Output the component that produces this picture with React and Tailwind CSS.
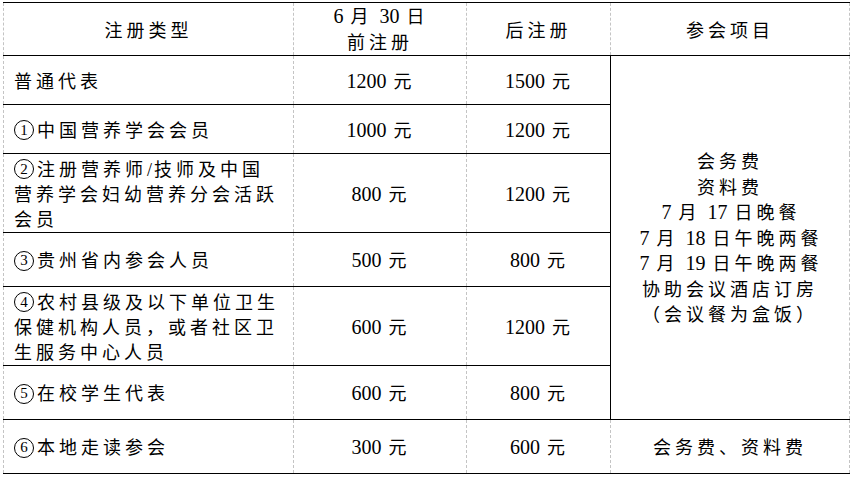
const NUM = /([0-9/ ]+)/;

// circled list marker drawn as a css ring with a real digit inside
function Circ({ n }) {
  return (
    <span className="inline-flex items-center justify-center w-[20px] h-[20px] rounded-full border border-black mr-[3px] align-[2px] text-[15px] leading-none" style={{ fontFamily: '"Liberation Serif", serif' }}>
      {n}
    </span>
  );
}

// mixed run: digits in Times-like face, CJK spaced out as in the Word doc
function T({ s }) {
  const m = s.match(/^([①②③④⑤⑥])(.*)$/);
  let mark = null;
  if (m) {
    mark = <Circ n={'①②③④⑤⑥'.indexOf(m[1]) + 1} />;
    s = m[2];
  }
  return (
    <>
      {mark}
      {s.split(NUM).filter(Boolean).map((part, i) =>
        part === '/' ? (
          <span key={i} className="text-[18px] tracking-[2px]" style={{ fontFamily: '"Liberation Serif", serif' }}>/</span>
        ) : NUM.test(part) ? (
          <span key={i} className="text-[20px] tracking-normal whitespace-pre px-[2px]" style={{ fontFamily: '"Liberation Serif", serif' }}>
            {part}
          </span>
        ) : (
          <span key={i} className="text-[18px] tracking-[4px]">{part}</span>
        )
      )}
    </>
  );
}

function Lines({ lines, h = 'h-[25px]' }) {
  return lines.map((l, i) => (
    <div key={i} className={`${h} whitespace-nowrap`}>
      <T s={l} />
    </div>
  ));
}

const cell = 'p-0 border-y border-y-black border-x border-x-[#c4c4c4] border-dashed [border-top-style:solid] [border-bottom-style:solid] align-middle';

const ROWS = [
  { h: 'h-[49px]', name: ['普通代表'], early: '1200 元', late: '1500 元' },
  { h: 'h-[49px]', name: ['①中国营养学会会员'], early: '1000 元', late: '1200 元' },
  { h: 'h-[79px]', name: ['②注册营养师/技师及中国', '营养学会妇幼营养分会活跃', '会员'], early: '800 元', late: '1200 元' },
  { h: 'h-[54px]', name: ['③贵州省内参会人员'], early: '500 元', late: '800 元' },
  { h: 'h-[79px]', name: ['④农村县级及以下单位卫生', '保健机构人员，或者社区卫', '生服务中心人员'], early: '600 元', late: '1200 元' },
  { h: 'h-[54px]', name: ['⑤在校学生代表'], early: '600 元', late: '800 元' },
];

const ITEMS = ['会务费', '资料费', '7 月 17 日晚餐', '7 月 18 日午晚两餐', '7 月 19 日午晚两餐', '协助会议酒店订房', '（会议餐为盒饭）'];

export default function App() {
  return (
    <div className="w-[851px] h-[479px] bg-white text-black text-[18px] pt-[2px] pl-[3px]" style={{ fontFamily: '"Noto Sans CJK SC", "Liberation Serif", sans-serif' }}>
      <table className="table-fixed border-collapse w-[846px]">
        <colgroup>
          <col className="w-[290px]" />
          <col className="w-[173px]" />
          <col className="w-[144px]" />
          <col className="w-[239px]" />
        </colgroup>
        <tbody>
          <tr className="h-[53px] leading-[25px]">
            <td className={`${cell} text-center`}><Lines lines={['注册类型']} /></td>
            <td className={`${cell} text-center`}><Lines lines={['6 月 30 日', '前注册']} h="h-[26px]" /></td>
            <td className={`${cell} text-center`}><Lines lines={['后注册']} /></td>
            <td className={`${cell} text-center`}><Lines lines={['参会项目']} /></td>
          </tr>
          {ROWS.map((r, i) => (
            <tr key={i} className={`${r.h} leading-[25px]`}>
              <td className={`${cell} pl-[10px] text-left`}><Lines lines={r.name} /></td>
              <td className={`${cell} text-center`}><Lines lines={[r.early]} /></td>
              <td className={`${cell} text-center`}><Lines lines={[r.late]} /></td>
              {i === 0 && (
                <td rowSpan={6} className={`${cell} text-center border-l-black [border-left-style:solid]`}>
                  <Lines lines={ITEMS} h="h-[25.6px]" />
                </td>
              )}
            </tr>
          ))}
          <tr className="h-[54px] leading-[25px]">
            <td className={`${cell} pl-[10px] text-left`}><Lines lines={['⑥本地走读参会']} /></td>
            <td className={`${cell} text-center`}><Lines lines={['300 元']} /></td>
            <td className={`${cell} text-center`}><Lines lines={['600 元']} /></td>
            <td className={`${cell} text-center`}><Lines lines={['会务费、资料费']} /></td>
          </tr>
        </tbody>
      </table>
    </div>
  );
}
